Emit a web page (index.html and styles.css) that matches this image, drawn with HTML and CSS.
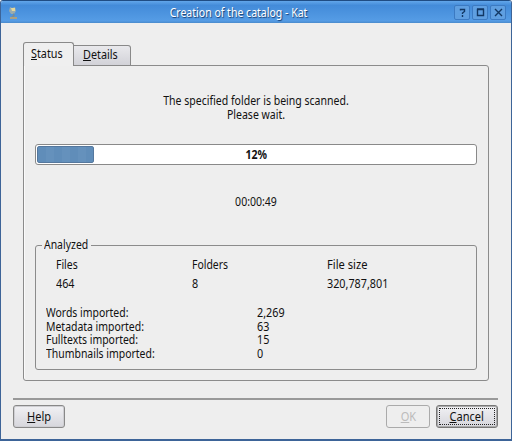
FILE: index.html
```html
<!DOCTYPE html>
<html lang="en">
<head>
<meta charset="utf-8">
<title>Creation of the catalog - Kat</title>
<link rel="stylesheet" href="styles.css">
</head>
<body>
<div class="window">
  <header class="titlebar">
    <svg class="app-icon" width="12" height="16" viewBox="0 0 12 16"><path d="M3 2l2 1 3-1 1 4-2 3H4L2 6z" fill="#9aacae"/><path d="M4 3h4v3H5z" fill="#e4d89a"/><path d="M6 8l2 2-1 2H4l2-2z" fill="#768d99"/><path d="M3 12h7v2H3z" fill="#aaa184"/></svg>
    <h1 class="title condensed">Creation of the catalog - Kat</h1>
    <div class="controls">
      <span class="control"><svg width="13" height="13" viewBox="0 0 13 13"><path d="M4.5 4.5V3.5h4v2l-2 1.5v1M6.5 9v2" /></svg></span>
      <span class="control"><svg width="13" height="13" viewBox="0 0 13 13"><path d="M3.5 3.5h6v6h-6zM3 3h7"/></svg></span>
      <span class="control"><svg width="13" height="13" viewBox="0 0 13 13"><path d="M3 3l7 7M10 3l-7 7"/></svg></span>
    </div>
  </header>
  <main class="content">
    <nav class="tabs">
      <span class="tab tab-active"><span class="label"><u>S</u>tatus</span></span>
      <span class="tab"><span class="label"><u>D</u>etails</span></span>
    </nav>
    <section class="panel">
      <p class="message condensed">The specified folder is being scanned.<br>Please wait.</p>
      <div class="progress"><div class="bar" style="width:12.9%"></div><b class="percent condensed">12%</b></div>
      <p class="time condensed">00:00:49</p>
      <fieldset class="group">
        <legend><span class="label">Analyzed</span></legend>
        <div class="totals">
          <span class="label">Files</span><span class="label">Folders</span><span class="label size">File size</span>
          <span class="num">464</span><span class="num">8</span><span class="num">320,787,801</span>
        </div>
        <div class="imports">
          <span class="label">Words imported:</span><span class="num">2,269</span>
          <span class="label">Metadata imported:</span><span class="num">63</span>
          <span class="label">Fulltexts imported:</span><span class="num">15</span>
          <span class="label">Thumbnails imported:</span><span class="num">0</span>
        </div>
      </fieldset>
    </section>
  </main>
  <footer class="footer">
    <button class="button help"><span class="caption"><u>H</u>elp</span></button>
    <button class="button ok" disabled><span class="caption"><u>O</u>K</span></button>
    <button class="button cancel"><span class="focus"><span class="caption"><u>C</u>ancel</span></span></button>
  </footer>
</div>
</body>
</html>
```
FILE: styles.css
```css
* { box-sizing: border-box; }
body { margin: 0; font: 12px/14px "Noto Sans", "Open Sans", sans-serif; color: #111; }
p, h1 { margin: 0; }
u { text-decoration: underline; text-underline-offset: 1px; text-decoration-skip-ink: none; }
.condensed { transform: scaleX(.877); }
.label, .num { display: inline-block; transform: scaleX(.87); transform-origin: 0 50%; white-space: nowrap; }
.num { transform: scaleX(.9); }
.size { transform: scaleX(.93); }
.caption { display: inline-block; transform: scaleX(.92); }
.window { width: 512px; height: 441px; background: #eee; border: 1px solid #3d6498; border-top-color: #1f4c83; border-bottom-width: 2px; border-radius: 3px 3px 0 0; display: flex; flex-direction: column; overflow: hidden; }
.titlebar { height: 22px; flex: none; display: flex; align-items: center; padding: 1px 5px 0 6px; background: linear-gradient(#62a6ea, #438bd9 20%, #559ce5 90%, #4a8acb); }
.app-icon { flex: none; width: 12px; margin-right: 4px; }
.title { flex: 1; text-align: center; color: #fff; font-size: 12px; font-weight: 400; text-shadow: 1px 1px 1px #173d70; }
.controls { display: flex; gap: 2px; }
.control { width: 16px; height: 15px; border: 1px solid #3c7ac2; border-radius: 2px; background: #5f9fe1; display: flex; align-items: center; justify-content: center; }
.control svg { flex: none; fill: none; stroke: #123763; stroke-width: 1.4; }
.content { padding: 19px 22px 0 22px; }
.tabs { display: flex; align-items: flex-end; height: 23px; position: relative; }
.tab { width: 57px; height: 21px; border: 1px solid #898989; border-left: 0; border-radius: 0 3px 0 0; background: linear-gradient(#e9e9ec, #d2d2d8); padding: 2px 0 0 9px; margin-bottom: -1px; }
.tab .label { transform: scaleX(.9); }
.tab-active { width: 51px; height: 24px; border: 1px solid #898989; border-bottom: 0; border-radius: 3px 3px 0 0; background: #efefef; padding-top: 4px; padding-left: 7px; }
.panel { height: 316px; border: 1px solid #8b8b8b; border-radius: 0 3px 3px 3px; box-shadow: inset 1px 0 #fafafa; padding: 28px 11px 0; }
.message, .time { text-align: center; }
.progress { height: 21px; margin-top: 22px; border: 1px solid #898989; border-radius: 3px; background: #fff; padding: 1px; display: grid; align-items: center; }
.bar { grid-area: 1/1; height: 17px; border: 1px solid #55789e; border-radius: 2px; background: repeating-linear-gradient(90deg, #608db9 0 8px, #6591bc 8px 16px); }
.percent { grid-area: 1/1; justify-self: center; }
.time { margin-top: 30px; }
.group { margin: 29px 0 0; height: 132px; min-width: 0; border: 1px solid #8b8b8b; border-radius: 3px; padding: 0 10px; }
.group legend { width: 49px; padding: 0 2px; margin-left: -4px; }
.totals { display: grid; grid-template-columns: 136px 135px 1fr; row-gap: 5px; padding: 6px 0 0 10px; }
.imports { display: grid; grid-template-columns: 211px 1fr; grid-auto-rows: 13.5px; padding-top: 15px; }
.footer { margin: 17px 13px 0 12px; padding-top: 5px; border-top: 2px solid #999; display: flex; }
.button { height: 23px; border: 1px solid #888; border-radius: 3px; background: linear-gradient(#f1f1f4, #d6d6dc); font: inherit; color: #111; padding: 0; box-shadow: inset 0 0 0 1px #cfcfd3; }
.help { width: 52px; }
.ok { width: 44px; margin-left: auto; margin-right: 6px; color: #bbb; border-color: #aaa; background: #eee; box-shadow: none; }
.cancel { width: 62px; border-color: #777; padding: 2px; box-shadow: inset 0 0 0 1px #aaa; }
.focus { display: block; height: 17px; border: 1px dotted #222; line-height: 15px; }
```
